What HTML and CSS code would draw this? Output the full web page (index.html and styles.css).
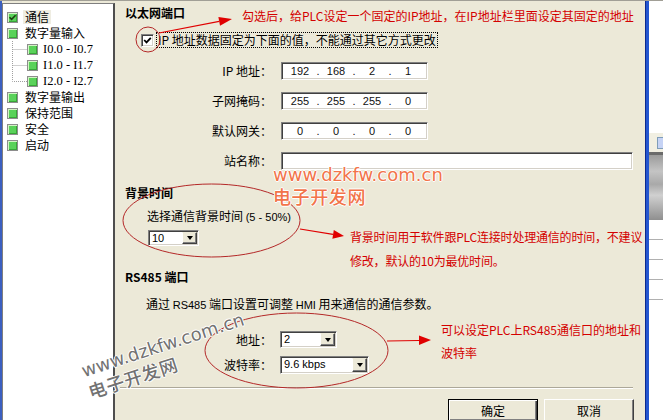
FILE: index.html
```html
<!DOCTYPE html>
<html lang="zh-CN">
<head>
    <meta charset="UTF-8">
    <meta name="viewport" content="width=device-width, initial-scale=1.0">
    <title>PLC 属性 - 通信</title>
    <link rel="stylesheet" href="styles.css">
</head>
<body>
<div class="window">
    <div class="topline"></div>
    <div class="row">
        <div class="edge"></div>
        <ul class="tree">
            <li class="node"><span class="ico"><svg width="9" height="9" viewBox="0 0 9 9"><path d="M1.5 4.2 L3.6 6.4 L7.6 2.2" fill="none" stroke="#1d3d12" stroke-width="1.6"/></svg></span><span class="txt sel">通信</span></li>
            <li class="node"><span class="ico"></span><span class="txt">数字量输入</span></li>
            <li class="node sub"><svg class="elbow" width="15" height="16"><path d="M0.5 0V16M0.5 8.5H15" fill="none" stroke="#a0a0a0" stroke-dasharray="1 1"/></svg><span class="ico"></span><span class="txt io">I0.0 - I0.7</span></li>
            <li class="node sub"><svg class="elbow" width="15" height="16"><path d="M0.5 0V16M0.5 8.5H15" fill="none" stroke="#a0a0a0" stroke-dasharray="1 1"/></svg><span class="ico"></span><span class="txt io">I1.0 - I1.7</span></li>
            <li class="node sub"><svg class="elbow" width="15" height="16"><path d="M0.5 0V8.5H15" fill="none" stroke="#a0a0a0" stroke-dasharray="1 1"/></svg><span class="ico"></span><span class="txt io">I2.0 - I2.7</span></li>
            <li class="node"><span class="ico"></span><span class="txt">数字量输出</span></li>
            <li class="node"><span class="ico"></span><span class="txt">保持范围</span></li>
            <li class="node"><span class="ico"></span><span class="txt">安全</span></li>
            <li class="node"><span class="ico"></span><span class="txt">启动</span></li>
        </ul>

        <div class="main">
            <h2 class="sect">以太网端口</h2>
            <div class="fixed-row">
                <span class="chk"><svg width="9" height="9" viewBox="0 0 9 9"><path d="M1.2 4 L3.5 6.4 L7.8 1.8" fill="none" stroke="#000" stroke-width="1.8"/></svg></span>
                <span class="focus">IP 地址数据固定为下面的值，不能通过其它方式更改</span>
            </div>
            <div class="ip-grid">
                <label>IP 地址：</label>
                <div class="field ip"><span class="oct">192</span><span class="dot">.</span><span class="oct">168</span><span class="dot">.</span><span class="oct">2</span><span class="dot">.</span><span class="oct">1</span></div>
                <label>子网掩码：</label>
                <div class="field ip"><span class="oct">255</span><span class="dot">.</span><span class="oct">255</span><span class="dot">.</span><span class="oct">255</span><span class="dot">.</span><span class="oct">0</span></div>
                <label>默认网关：</label>
                <div class="field ip"><span class="oct">0</span><span class="dot">.</span><span class="oct">0</span><span class="dot">.</span><span class="oct">0</span><span class="dot">.</span><span class="oct">0</span></div>
                <label>站名称：</label>
                <div class="field name"></div>
            </div>

            <h2 class="sect bg-title">背景时间</h2>
            <p class="hint">选择通信背景时间 <span class="lat">(5 - 50%)</span></p>
            <div class="combo c-time"><span class="val">10</span><span class="drop"></span></div>

            <h2 class="sect rs-title">RS485 端口</h2>
            <p class="desc">通过 <span class="lat">RS485</span> 端口设置可调整 <span class="lat">HMI</span> 用来通信的通信参数。</p>
            <div class="rs-grid">
                <label>地址：</label>
                <div class="combo c-addr"><span class="val">2</span><span class="drop"></span></div>
                <label>波特率：</label>
                <div class="combo c-baud"><span class="val">9.6 kbps</span><span class="drop"></span></div>
            </div>

            <div class="sep"></div>
            <div class="actions">
                <button class="btn default">确定</button>
                <button class="btn">取消</button>
            </div>
        </div>

        <div class="frame"></div>
        <div class="other">
            <div class="o-gap"></div>
            <div class="o-bar"><span class="o-btn"></span></div>
            <div class="o-line"></div>
            <div class="o-head"></div>
            <div class="o-rows"></div>
        </div>
    </div>

    <!-- annotations drawn over the dialog -->
    <svg class="marks" width="663" height="420">
        <g fill="none" stroke="#b42828" stroke-width="1">
            <ellipse cx="148" cy="39.5" rx="12" ry="12.5"/>
            <ellipse cx="211.5" cy="220.5" rx="88.5" ry="36.5"/>
            <ellipse cx="296.5" cy="350.5" rx="91.5" ry="37.5"/>
        </g>
        <g stroke="#e00000" stroke-width="1.2" fill="#e00000">
            <line x1="159" y1="33" x2="219.2" y2="21.4"/>
            <polygon points="232,19 218.4,17 220,25.8" stroke="none"/>
            <line x1="300" y1="229" x2="333" y2="234.3"/>
            <polygon points="344,236 333.8,229.9 332.4,238.7" stroke="none"/>
            <line x1="387" y1="341" x2="419" y2="340.5"/>
            <polygon points="431,340 419,335.5 419,345" stroke="none"/>
        </g>
    </svg>
    <div class="note n1">勾选后，给PLC设定一个固定的IP地址，在IP地址栏里面设定其固定的地址</div>
    <div class="note n2">背景时间用于软件跟PLC连接时处理通信的时间，不建议<br>修改，默认的10为最优时间。</div>
    <div class="note n3">可以设定PLC上RS485通信口的地址和<br>波特率</div>

    <div class="wm wm-orange"><div class="wm-url">www.dzkfw.com.cn</div><div class="wm-name">电子开发网</div></div>
    <div class="wm wm-gray"><div class="wm-url">www.dzkfw.com.cn</div><div class="wm-name">电子开发网</div></div>
</div>
</body>
</html>
```

FILE: styles.css
```css
* {
    box-sizing: border-box;
}
body {
    margin: 0;
    font-family: "Noto Sans CJK SC", "Liberation Sans", sans-serif;
    font-size: 12px;
    color: #000;
    background-color: #ece9d8;
}
.window {
    position: relative;
    display: flex;
    flex-direction: column;
    width: 663px;
    height: 420px;
    overflow: hidden;
    background-color: #ece9d8;
}
.topline {
    height: 1px;
    background-color: #a19f96;
}
.row {
    flex: 1;
    display: flex;
    min-height: 0;
}
.edge {
    flex: none;
    width: 2px;
    background-color: #3b5fc0;
}

/* tree */
.tree {
    flex: none;
    width: 113px;
    margin: 2px 0 0;
    padding: 5px 0 0;
    list-style: none;
    background-color: #fff;
    border-left: 1px solid #7f7f7f;
    border-top: 1px solid #7f7f7f;
    border-right: 2px solid #4e4e4e;
}
.node {
    display: flex;
    align-items: center;
    height: 16px;
    padding-left: 4px;
    white-space: nowrap;
}
.node.sub {
    padding-left: 9px;
}
.elbow {
    flex: none;
}
.ico {
    flex: none;
    display: flex;
    align-items: center;
    justify-content: center;
    width: 11px;
    height: 11px;
    margin-right: 5px;
    border: 1px solid #8d8d8d;
    background-color: #5ad25a;
    box-shadow: inset 1px 1px 0 #d2f5c4, inset -1px -1px 0 #38a638;
}
.sub .ico {
    margin-right: 3px;
}
.txt {
    padding: 0 2px;
    line-height: 14px;
}
.txt.sel {
    background-color: #efede2;
}
.txt.io {
    font-family: "Liberation Serif", serif;
    font-size: 12.5px;
}

/* main panel */
.main {
    flex: none;
    width: 530px;
    padding: 4px 12px 0 10px;
}
.sect {
    margin: 0;
    font-size: 12px;
    font-weight: bold;
    line-height: 16px;
}
.lat {
    font-family: "Liberation Sans", sans-serif;
    font-size: 11px;
}
.fixed-row {
    display: flex;
    align-items: center;
    height: 16px;
    margin: 11px 0 0 16px;
}
.chk {
    display: flex;
    align-items: center;
    justify-content: center;
    width: 13px;
    height: 13px;
    background-color: #fff;
    border: 1px solid;
    border-color: #808080 #fff #fff #808080;
    box-shadow: inset 1px 1px 0 #404040, inset -1px -1px 0 #d4d0c8;
}
.focus {
    margin-left: 2px;
    padding: 1px;
    border: 1px dotted #000;
    line-height: 12px;
    white-space: nowrap;
}
.ip-grid {
    display: grid;
    grid-template-columns: 147px 352px;
    grid-auto-rows: 18px;
    gap: 12px 9px;
    margin-top: 14px;
}
.ip-grid label,
.rs-grid label {
    justify-self: stretch;
    align-self: center;
    text-align: right;
    line-height: 16px;
}
.field {
    background-color: #fff;
    border: 1px solid;
    border-color: #808080 #fff #fff #808080;
    box-shadow: inset 1px 1px 0 #404040, inset -1px -1px 0 #d4d0c8;
}
.ip {
    display: flex;
    width: 147px;
    font-family: "Liberation Sans", sans-serif;
    font-size: 11px;
    line-height: 16px;
    color: #111;
}
.oct {
    width: 36px;
    text-align: center;
}
.dot {
    width: 0;
    display: flex;
    justify-content: center;
}
.bg-title {
    margin-top: 15px;
}
.hint {
    margin: 7px 0 0 22px;
    line-height: 16px;
}
.combo {
    display: flex;
    padding: 1px;
    background-color: #fff;
    border: 1px solid;
    border-color: #808080 #fff #fff #808080;
    box-shadow: inset 1px 1px 0 #404040, inset -1px -1px 0 #d4d0c8;
}
.val {
    flex: 1;
    padding-left: 2px;
    font-family: "Liberation Sans", sans-serif;
    font-size: 11px;
    line-height: 13px;
}
.drop {
    flex: none;
    display: flex;
    align-items: center;
    justify-content: center;
    width: 15px;
    background-color: #ece9d8;
    border: 1px solid;
    border-color: #ece9d8 #404040 #404040 #fff;
    box-shadow: inset -1px -1px 0 #808080;
}
.drop::after {
    content: "";
    border-left: 3.5px solid transparent;
    border-right: 3.5px solid transparent;
    border-top: 4px solid #000;
}
.c-time {
    width: 51px;
    height: 16px;
    margin: 5px 0 0 23px;
}
.rs-title {
    margin-top: 23px;
}
.desc {
    margin: 11px 0 0 21px;
    line-height: 16px;
}
.rs-grid {
    display: grid;
    grid-template-columns: 147px auto;
    gap: 8px 8px;
    justify-items: start;
    margin-top: 18px;
}
.c-addr {
    width: 57px;
    height: 17px;
}
.c-baud {
    width: 89px;
    height: 18px;
}
.sep {
    margin: 13px 0 0 -5px;
    border-top: 1px solid #aca899;
    border-bottom: 1px solid #fff;
}
.actions {
    display: flex;
    justify-content: flex-end;
    gap: 6px;
    margin: 10px -1px 0 0;
}
.btn {
    width: 90px;
    height: 23px;
    padding: 0;
    font: inherit;
    color: #000;
    background-color: #ece9d8;
    border: 1px solid;
    border-color: #fff #404040 #404040 #fff;
    box-shadow: inset -1px -1px 0 #808080;
}
.btn.default {
    border-color: #000;
    box-shadow: inset 1px 1px 0 #fff, inset -1px -1px 0 #404040, inset -2px -2px 0 #808080;
}

/* neighbouring window on the right */
.frame {
    flex: none;
    width: 4px;
    background-color: #2456d0;
    border-left: 1px solid #0b2a8f;
}
.other {
    flex: none;
    width: 14px;
    display: flex;
    flex-direction: column;
    background-color: #fff;
}
.o-gap {
    height: 132px;
}
.o-bar {
    height: 19px;
    display: flex;
    align-items: center;
    justify-content: flex-end;
    background-color: #f1efe2;
}
.o-btn {
    width: 6px;
    height: 12px;
    background-color: #c6d3f5;
    border: 1px solid #7f9db9;
    border-right: 0;
}
.o-line {
    height: 3px;
    background-color: #6b6b6b;
}
.o-head {
    height: 65px;
    background: linear-gradient(#9b9b9b, #c4c4c4 25%, #a9a9a9 45%, #d0d0d0 62%, #8f8f8f);
}
.o-rows {
    height: 80px;
    background: repeating-linear-gradient(#fff 0 19px, #b0b0b0 19px 20px);
}

/* annotations */
.marks {
    position: absolute;
    left: 0;
    top: 0;
    pointer-events: none;
}
.note {
    position: absolute;
    color: #d40000;
    font-size: 12px;
    white-space: nowrap;
}
.n1 {
    left: 242px;
    top: 8px;
    line-height: 16px;
}
.n2 {
    left: 350px;
    top: 225px;
    line-height: 24px;
    letter-spacing: -0.2px;
}
.n3 {
    left: 441px;
    top: 318px;
    line-height: 23px;
}
.wm {
    position: absolute;
    white-space: nowrap;
    text-shadow: -1px 0 #fff, 1px 0 #fff, 0 -1px #fff, 0 1px #fff;
    pointer-events: none;
}
.wm-url {
    font-family: "DejaVu Sans", sans-serif;
    font-size: 18px;
    line-height: 20px;
}
.wm-name {
    font-family: "Noto Sans CJK SC", sans-serif;
    font-size: 18px;
    font-weight: 500;
    line-height: 22px;
    letter-spacing: 0.6px;
}
.wm-orange {
    left: 273px;
    top: 165px;
    color: #f2744a;
}
.wm-gray {
    left: 79px;
    top: 362px;
    color: #727272;
    transform: rotate(-18deg);
    transform-origin: 0 0;
}
```
